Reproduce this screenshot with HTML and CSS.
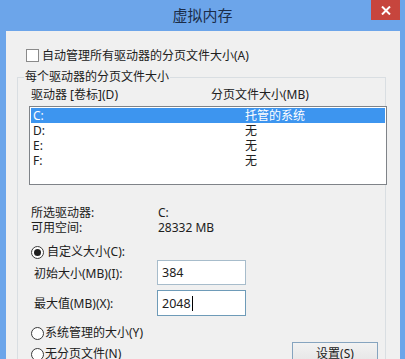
FILE: index.html
```html
<!DOCTYPE html>
<html lang="zh-CN">
<head>
<meta charset="utf-8">
<title>虚拟内存</title>
<link rel="stylesheet" href="styles.css">
</head>
<body>
<div class="window">
  <div class="titlebar">
    <span class="title">虚拟内存</span>
    <button class="close" aria-label="关闭">
      <svg width="10" height="9" viewBox="0 0 10 9"><path d="M1 0.5 L9 8.5 M9 0.5 L1 8.5" stroke="#fff" stroke-width="2" fill="none"/></svg>
    </button>
  </div>
  <div class="client">
    <div class="check-row"><span class="checkbox"></span><span>自动管理所有驱动器的分页文件大小(A)</span></div>
    <fieldset class="group">
      <legend>每个驱动器的分页文件大小</legend>
      <div class="inner">
        <div class="list-header"><span class="hcol1">驱动器 [卷标](D)</span><span>分页文件大小(MB)</span></div>
        <div class="listbox">
          <div class="row selected"><span class="col1">C:</span><span>托管的系统</span></div>
          <div class="row"><span class="col1">D:</span><span>无</span></div>
          <div class="row"><span class="col1">E:</span><span>无</span></div>
          <div class="row"><span class="col1">F:</span><span>无</span></div>
        </div>
        <div class="info">
          <span>所选驱动器:</span><span>C:</span>
          <span>可用空间:</span><span>28332 MB</span>
        </div>
        <div class="radio-row custom"><span class="radio checked"></span><span>自定义大小(C):</span></div>
        <div class="field-row"><span class="field-label">初始大小(MB)(I):</span><div class="textbox">384</div></div>
        <div class="field-row second"><span class="field-label">最大值(MB)(X):</span><div class="textbox focused">2048<span class="caret"></span></div></div>
        <div class="radio-row sys"><span class="radio"></span><span>系统管理的大小(Y)</span></div>
        <div class="bottom-row">
          <div class="radio-row none"><span class="radio"></span><span>无分页文件(N)</span></div>
          <button class="set-btn">设置(S)</button>
        </div>
      </div>
    </fieldset>
  </div>
</div>
</body>
</html>
```
FILE: styles.css
```css
* { box-sizing: border-box; }
html, body { margin: 0; padding: 0; }
body {
  background: #6ca5ea;
  font-family: "Noto Sans", "Noto Sans CJK SC", sans-serif;
  font-size: 12px;
  color: #202020;
}
.window {
  width: 405px;
  height: 359px;
  display: flex;
  flex-direction: column;
  overflow: hidden;
  position: relative;
}
.titlebar {
  height: 31px;
  flex: none;
  display: flex;
  align-items: center;
  justify-content: center;
}
.title {
  font-size: 15px;
  line-height: 20px;
  color: #1b2d48;
  margin-top: -1px;
}
.close {
  position: absolute;
  top: 0;
  right: 5px;
  width: 29px;
  height: 20px;
  padding: 0;
  border: 0;
  background: #c7453d;
  display: flex;
  align-items: center;
  justify-content: center;
}
.client {
  flex: 1;
  margin: 0 5px 0 6px;
  background: #f0f0f0;
  padding-top: 18px;
}
.check-row {
  display: flex;
  align-items: center;
  height: 13px;
  margin-left: 20px;
  gap: 3px;
  line-height: 13px;
}
.checkbox {
  width: 13px;
  height: 13px;
  border: 1px solid #8a8a8a;
  background: #fff;
  flex: none;
}
.group {
  margin: 7px 14px 0 11px;
  padding: 0;
  border: 1px solid #d9dee2;
  min-width: 0;
  height: 320px;
}
.group legend {
  padding: 0 1px;
  margin-left: 6px;
  line-height: 16px;
}
.inner {
  padding-left: 11px;
}
.list-header {
  display: flex;
  height: 16px;
  line-height: 16px;
  margin-top: 2px;
  padding-left: 2px;
}
.hcol1 { width: 180px; }
.listbox {
  margin-top: 3px;
  margin-right: -2px;
  height: 79px;
  border: 1px solid #7f8388;
  background: #fff;
  padding: 1px;
}
.row {
  display: flex;
  height: 15px;
  line-height: 15px;
  padding-left: 2px;
}
.row.selected {
  background: #3d95ef;
  color: #fff;
}
.col1 { width: 212px; }
.info {
  margin-top: 20px;
  display: grid;
  grid-template-columns: 127px auto;
  grid-auto-rows: 15px;
  line-height: 15px;
  padding-left: 2px;
}
.radio-row {
  display: flex;
  align-items: center;
  height: 16px;
  line-height: 16px;
  padding-left: 2px;
  gap: 3px;
}
.radio-row.custom { margin-top: 9px; }
.radio-row.sys { margin-top: 9px; gap: 1px; }
.radio-row.none { margin-top: 4px; gap: 1px; }
.radio {
  width: 13px;
  height: 13px;
  border: 1px solid #3a3a3a;
  border-radius: 50%;
  background: #fff;
  flex: none;
  display: flex;
  align-items: center;
  justify-content: center;
}
.radio.checked::after {
  content: "";
  width: 7px;
  height: 7px;
  border-radius: 50%;
  background: #1f1f1f;
}
.field-row {
  display: flex;
  align-items: center;
  height: 25px;
  padding-left: 5px;
}
.field-row.second { margin-top: 5px; height: 26px; }
.field-label { width: 123px; }
.textbox {
  width: 89px;
  height: 100%;
  border: 1px solid #a7bccb;
  background: #fff;
  padding-left: 4px;
  display: flex;
  align-items: center;
  font-size: 12.5px;
}
.textbox.focused { border-color: #6e9bb8; }
.caret {
  width: 1px;
  height: 15px;
  background: #000;
  margin-left: 1px;
}
.bottom-row {
  display: flex;
  align-items: flex-start;
  margin-top: 1px;
}
.set-btn {
  margin-left: auto;
  margin-right: 7px;
  width: 86px;
  height: 24px;
  border: 1px solid #86a4bf;
  background: linear-gradient(#f2f2f2, #e4e4e4);
  font-family: inherit;
  font-size: 12px;
  color: #202020;
  padding: 0;
  line-height: 20px;
}
```
